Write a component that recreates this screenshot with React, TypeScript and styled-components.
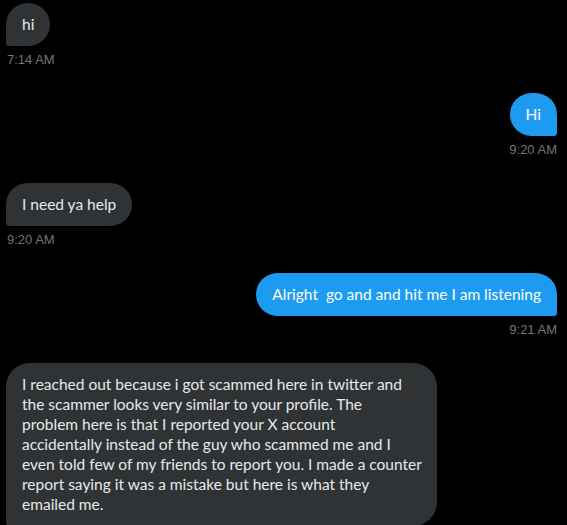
import React from "react";
import styled, { createGlobalStyle, css } from "styled-components";

const GlobalStyle = createGlobalStyle`
  html, body {
    margin: 0;
    padding: 0;
    background: #000000;
  }
  body {
    font-family: Lato, "Noto Sans", Arial, sans-serif;
  }
`;

const Thread = styled.div`
  display: flex;
  flex-direction: column;
  padding: 3px 10px 0 6px;
  width: 567px;
  height: 525px;
  box-sizing: border-box;
  overflow: hidden;
`;

const Group = styled.div<{ mine?: boolean }>`
  display: flex;
  flex-direction: column;
  align-items: ${({ mine }) => (mine ? "flex-end" : "flex-start")};
  padding-bottom: 25px;
`;

const Bubble = styled.div<{ mine?: boolean; wide?: boolean }>`
  box-sizing: border-box;
  padding: 11px 16px 12px;
  border-radius: 24px;
  font-size: 15.5px;
  line-height: 20px;
  color: #e7e9ea;
  white-space: nowrap;
  width: ${({ wide }) => (wide ? "431px" : "auto")};
  ${({ mine }) =>
    mine
      ? css`
          background: #1d9bf0;
          color: #ffffff;
          border-bottom-right-radius: 4px;
        `
      : css`
          background: #2f3336;
          border-bottom-left-radius: 4px;
        `};
`;

const Line = styled.span`
  display: block;
`;

const Time = styled.div`
  margin-top: 6px;
  font-family: "Liberation Sans", Arial, sans-serif;
  font-size: 13px;
  line-height: 16px;
  color: #71767b;
  padding-left: 1px;
`;

type Message = { mine: boolean; lines: string[]; time?: string; wide?: boolean };

const messages: Message[] = [
  { mine: false, lines: ["hi"], time: "7:14 AM" },
  { mine: true, lines: ["Hi"], time: "9:20 AM" },
  { mine: false, lines: ["I need ya help"], time: "9:20 AM" },
  { mine: true, lines: ["Alright\u00a0 go and and hit me I am listening"], time: "9:21 AM" },
  {
    mine: false,
    wide: true,
    lines: [
      "I reached out because i got scammed here in twitter and",
      "the scammer looks very similar to your profile. The",
      "problem here is that I reported your X account",
      "accidentally instead of the guy who scammed me and I",
      "even told few of my friends to report you. I made a counter",
      "report saying it was a mistake but here is what they",
      "emailed me.",
    ],
  },
];

export default function App() {
  return (
    <>
      <GlobalStyle />
      <Thread>
        {messages.map((m, i) => (
          <Group key={i} mine={m.mine}>
            <Bubble mine={m.mine} wide={m.wide}>
              {m.lines.map((l, j) => (
                <Line key={j}>{l}</Line>
              ))}
            </Bubble>
            {m.time && <Time>{m.time}</Time>}
          </Group>
        ))}
      </Thread>
    </>
  );
}
